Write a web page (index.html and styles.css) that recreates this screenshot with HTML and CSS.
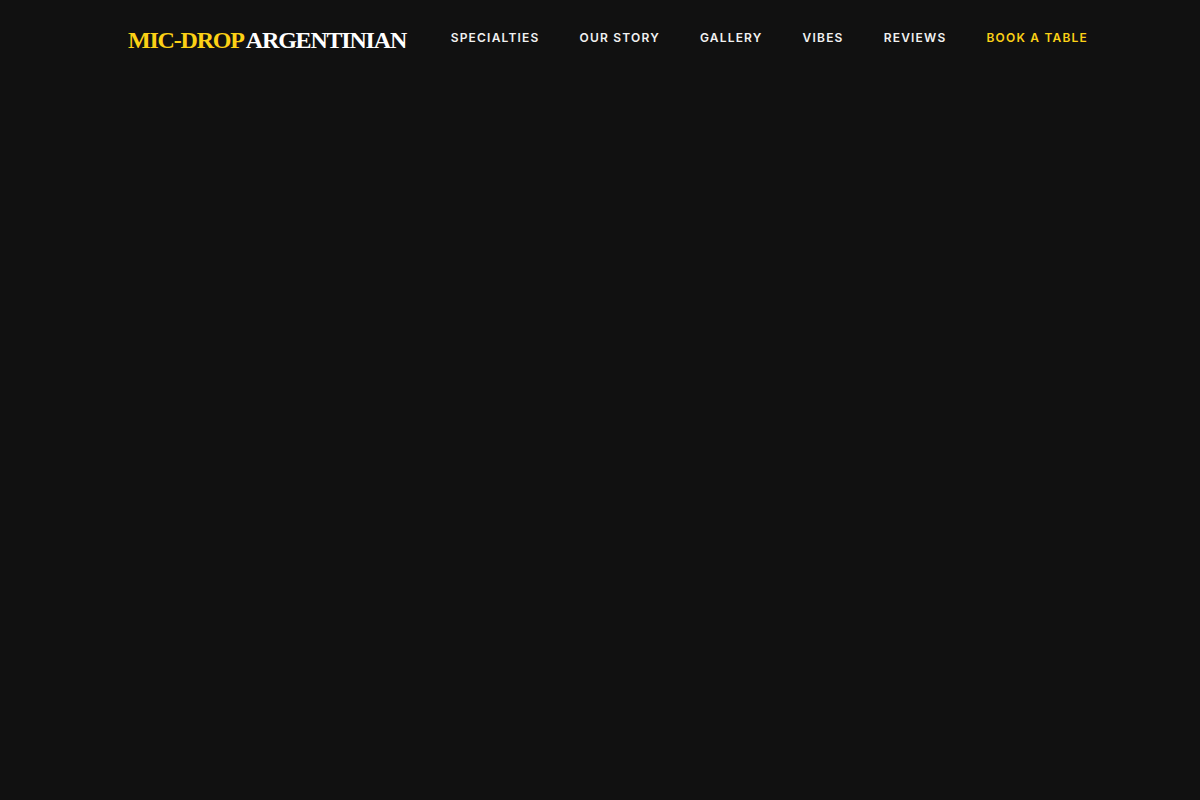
FILE: index.html
```html
<!DOCTYPE html>
<html lang="en">
<head>
    <meta charset="UTF-8">
    <meta name="viewport" content="width=device-width, initial-scale=1.0">
    <title>Mic-Drop Argentinian</title>
    <link rel="stylesheet" href="styles.css">
</head>
<body>
    <header class="site-header">
        <a href="#" class="logo"><span class="logo-accent">MIC-DROP</span> ARGENTINIAN</a>
        <nav class="main-nav">
            <a href="#specialties">Specialties</a>
            <a href="#story">Our Story</a>
            <a href="#gallery">Gallery</a>
            <a href="#vibes">Vibes</a>
            <a href="#reviews">Reviews</a>
            <a href="#book" class="nav-cta">Book a Table</a>
        </nav>
    </header>
    <main class="page"></main>
</body>
</html>
```

FILE: styles.css
```css
* {
    box-sizing: border-box;
    margin: 0;
    padding: 0;
}

body {
    font-family: 'Inter', 'Liberation Sans', sans-serif;
    background: #111111;
    color: #fff;
    min-height: 100vh;
}

.site-header {
    display: flex;
    justify-content: space-between;
    align-items: center;
    height: 78px;
    padding: 0 112px 0 128px;
}

.logo {
    font-family: 'Liberation Serif', 'Times New Roman', serif;
    font-weight: bold;
    font-size: 24px;
    letter-spacing: -1.2px;
    color: #fff;
    text-decoration: none;
    white-space: nowrap;
    margin-top: 2px;
}

.logo-accent {
    color: #fcd116;
}

.main-nav {
    display: flex;
    gap: 40px;
    margin-bottom: 4px;
}

.main-nav a {
    color: #f2f2f2;
    text-decoration: none;
    text-transform: uppercase;
    white-space: nowrap;
    font-size: 12px;
    font-weight: 600;
    letter-spacing: 1.2px;
}

.main-nav .nav-cta {
    color: #fcd116;
}
```
